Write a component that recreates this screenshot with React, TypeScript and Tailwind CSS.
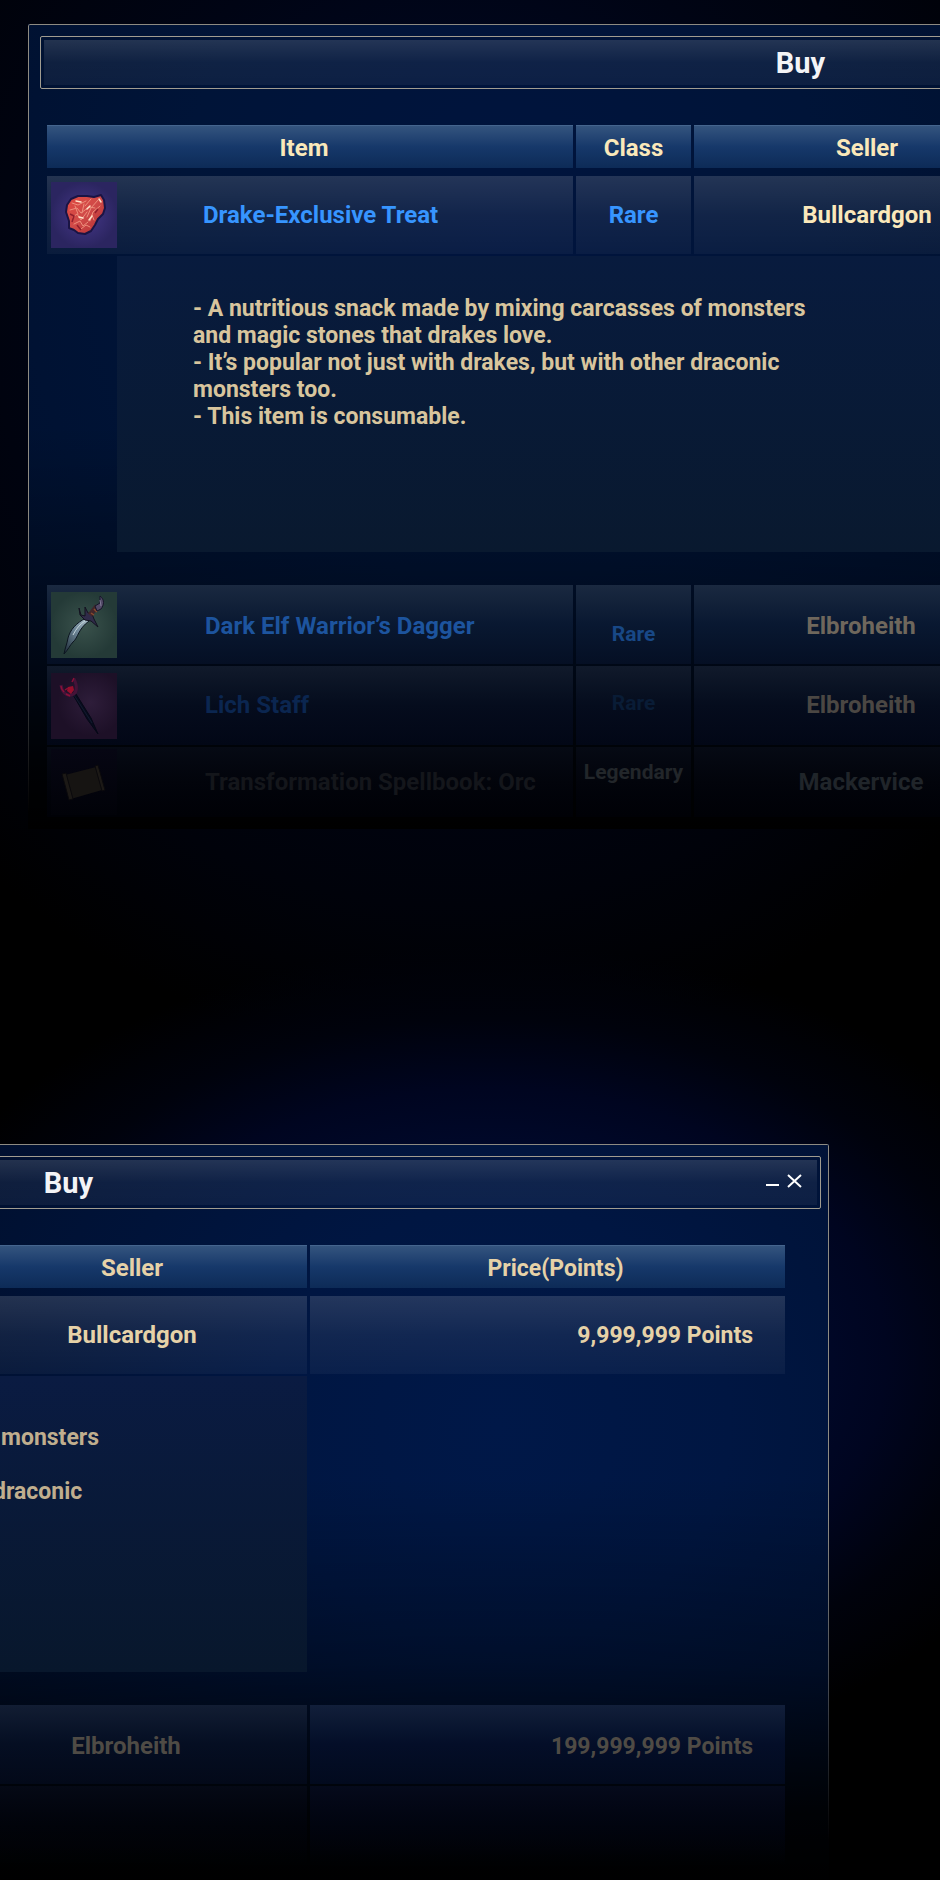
import type { ReactNode } from "react"
import clsx from "clsx"

const SHOP_ITEMS = [
  {
    id: "dagger",
    name: "Dark Elf Warrior’s Dagger",
    nameStyle: "text-[#1d549e] pt-1",
    rank: "Rare",
    rankStyle: "text-[#184886] pt-5",
    seller: "Elbroheith",
    sellerStyle: "text-[#6f675c] pt-1",
    cell: "h-[79px] from-[#1a2940] via-[#091831] to-[#050f24]",
    icon: <DaggerIcon />
  },
  {
    id: "staff",
    name: "Lich Staff",
    nameStyle: "text-[#0b2650]",
    rank: "Rare",
    rankStyle: "text-[#091c36] pb-1",
    seller: "Elbroheith",
    sellerStyle: "text-[#4b4743]",
    cell: "h-[79px] from-[#111a2b] via-[#050c1d] to-[#020716]",
    icon: <StaffIcon />
  },
  {
    id: "spellbook",
    name: "Transformation Spellbook: Orc",
    nameStyle: "text-[#14161b]",
    rank: "Legendary",
    rankStyle: "text-[#22262a] pb-5",
    seller: "Mackervice",
    sellerStyle: "text-[#20252a]",
    cell: "h-[70px] from-[#060a14] via-[#02040b] to-[#000106]",
    icon: <SpellbookIcon />
  }
]

const HEAD_CELL =
  "h-[43px] p-0 pt-0.5 font-bold border-t border-[#45658e] bg-linear-to-b from-[#34547e] via-[#16386a] to-[#0d2b57]"
const ITEM_CELL = "h-[78px] p-0 bg-linear-to-b from-white/14 via-white/7 to-white/4"
const DIM_CELL = "p-0 bg-linear-to-b"

function MeatIcon() {
  return (
    <svg viewBox="0 0 66 66" className="block size-[66px] shrink-0" aria-hidden="true">
      <defs>
        <radialGradient id="meat-bg">
          <stop offset="0" stopColor="#46388a" />
          <stop offset="1" stopColor="#2b2560" />
        </radialGradient>
        <linearGradient id="meat" x1="0" y1="0" x2="1" y2="1">
          <stop offset="0" stopColor="#e0483f" />
          <stop offset="0.5" stopColor="#d04a48" />
          <stop offset="1" stopColor="#b02b30" />
        </linearGradient>
      </defs>
      <rect width="66" height="66" fill="url(#meat-bg)" />
      <path
        d="M20 17 27 14 36 14 43 15 50 13 53 18 54 26 52 32 47 37 44 43 40 49 34 52 27 51 23 48 18 46 18 39 15 30 16 23Z"
        fill="url(#meat)"
        stroke="#1a1444"
        strokeWidth="2"
        strokeLinejoin="round"
      />
      <path
        d="M21 21l6 2 8-4M19 28l7-2 4 5 8-6 6 1M22 35l4-3 4 6 6-8M24 24l3 8M33 22l-2 9M40 17l-6 7M47 18l-7 8-4 9M49 24l-7 6-3 9M23 42l6-3 3 5 5-4M30 47l5-4 4 2M41 33l2 5"
        fill="none"
        stroke="#ee8f7c"
        strokeLinecap="round"
      />
      <path d="M25 19l5 1M36 27l3-3M28 35l4 1M38 38l3-4M48 17l2 3" stroke="#ffe0c8" strokeWidth="1.5" strokeLinecap="round" />
      <path d="M19 32l4 2-2 6M26 43l4 5M44 31l3-4" fill="none" stroke="#931f2c" strokeWidth="1.5" />
    </svg>
  )
}

function DaggerIcon() {
  return (
    <svg viewBox="0 0 66 66" className="block size-[66px] shrink-0" aria-hidden="true">
      <defs>
        <radialGradient id="dagger-bg">
          <stop offset="0" stopColor="#3a524c" />
          <stop offset="1" stopColor="#243a37" />
        </radialGradient>
        <linearGradient id="blade" x1="1" y1="0" x2="0" y2="1">
          <stop offset="0" stopColor="#b0c3cc" />
          <stop offset="0.45" stopColor="#6a8292" />
          <stop offset="1" stopColor="#1a2734" />
        </linearGradient>
      </defs>
      <rect width="66" height="66" fill="url(#dagger-bg)" />
      <path
        d="M35 26C25 31 19 38 17 46 16 52 14 56 13 62 17 58 19 53 22 50 27 46 27 37 38 29Z"
        fill="url(#blade)"
        stroke="#0c1520"
      />
      <path d="M34 29C29 32 25 37 22 43" fill="none" stroke="#c5d5da" />
      <path
        d="M28 16l2 7 4 1 0-9 3 6 4 1 2 5 4 8-7-6-6-1-5-5Z"
        fill="#302b49"
        stroke="#12121f"
        strokeLinejoin="round"
      />
      <path d="M39 23 46 14" stroke="#42262a" strokeWidth="5" />
      <path d="M40 21l3 2M43 17l3 3M45 14l3 2" stroke="#8a4a2e" strokeWidth="1.5" />
      <path d="M44 14 49 11 49 4C54 8 53 13 50 17L46 19Z" fill="#514966" stroke="#17152a" strokeLinejoin="round" />
      <path d="M49 8l1 6" stroke="#837b98" />
    </svg>
  )
}

function StaffIcon() {
  return (
    <svg viewBox="0 0 66 66" className="block size-[66px] shrink-0" aria-hidden="true">
      <defs>
        <radialGradient id="staff-bg" cx="0.6" cy="0.45">
          <stop offset="0" stopColor="#2e1d3a" />
          <stop offset="1" stopColor="#1d1027" />
        </radialGradient>
      </defs>
      <rect width="66" height="66" fill="url(#staff-bg)" />
      <path d="M21 20 25 21 40 45 47 61 36 46Z" fill="#080c1d" stroke="#050817" strokeLinejoin="round" />
      <path d="M23 22 41 50" stroke="#121b30" />
      <path d="M10 12C11 19 15 23 20 22 26 21 27 14 23 6" fill="none" stroke="#451338" strokeWidth="3" />
      <path d="M10 13c0 3 2 5 3 6M21 9l2-4M14 17l3-2M15 21l4 2" fill="none" stroke="#8a1038" strokeWidth="1.5" />
      <path d="M17 14l5-1 1 4-3 4-4-3Z" fill="#970f2c" />
    </svg>
  )
}

function SpellbookIcon() {
  return (
    <svg viewBox="0 0 66 66" className="block size-[66px] shrink-0" aria-hidden="true">
      <defs>
        <linearGradient id="spellbook-bg" x1="0" y1="0" x2="0" y2="1">
          <stop offset="0" stopColor="#060613" />
          <stop offset="1" stopColor="#010208" />
        </linearGradient>
      </defs>
      <rect width="66" height="66" fill="url(#spellbook-bg)" />
      <path d="M14 26 45 18 51 41 20 50Z" fill="#161412" />
      <path d="M11 25 15 24 22 50 18 51Z" fill="#1c1916" stroke="#0a090c" />
      <path d="M44 17 47 16 54 41 51 42Z" fill="#1c1916" stroke="#0a090c" />
    </svg>
  )
}

// Thin outline that dissolves towards the bottom of the window
function Frame({ className }: { className: string }) {
  return <div className={clsx("absolute inset-0 pointer-events-none border-t border-[#8e8b82]", className)} />
}

function TitleBar({ children }: { children?: ReactNode }) {
  return (
    <div className="relative w-[1513px] shrink-0 h-[53px] p-[3px] border border-[#a09c90] rounded-xs">
      <div className="relative h-full flex items-center justify-center pl-2 bg-linear-to-b from-white/14 via-white/6 to-white/5">
        <h2 className="text-[29px] leading-8 font-bold text-[#f4f4f6]">Buy</h2>
        {children}
      </div>
    </div>
  )
}

const App = () => {
  return (
    <main className="overflow-hidden bg-black bg-[radial-gradient(ellipse_65%_22%_at_52%_72%,#000f3c_0%,#000c34_35%,#000520_65%,#00020c_82%,transparent_100%),radial-gradient(ellipse_75%_40%_at_48%_16%,#000a2a_0%,#000414_50%,#00020a_80%,transparent_100%)] font-[Roboto,'Liberation_Sans',sans-serif] text-[24px] leading-[27px] font-bold">
      <section className="pt-6 pl-7 pb-[291px]">
        <div className="relative pl-3 pt-3 pb-2.5 bg-[linear-gradient(to_bottom,transparent_50%,rgb(0_0_0/0.35)_70%,rgb(0_0_0/0.9)_92%,black_100%),radial-gradient(ellipse_70%_90%_at_52%_25%,#00143e_0%,#001438_50%,#00102e_100%)]">
          <Frame className="border-l rounded-tl-xs mask-[linear-gradient(to_bottom,black_60%,transparent_98%)]" />
          <TitleBar />
          <table className="table-fixed w-[999px] ml-1 mt-[34px] border-separate border-spacing-x-[3px] border-spacing-y-0.5">
            <colgroup>
              <col className="w-[526px]" />
              <col className="w-[115px]" />
              <col className="w-[346px]" />
            </colgroup>
            <thead className="text-[#fae8ba]">
              <tr>
                <th className={clsx(HEAD_CELL, "pr-3")}>Item</th>
                <th className={HEAD_CELL}>Class</th>
                <th className={HEAD_CELL}>Seller</th>
              </tr>
            </thead>
            <tbody>
              <tr aria-hidden="true">
                <td colSpan={3} className="h-1 p-0" />
              </tr>
              <tr>
                <td className={ITEM_CELL}>
                  <div className="flex items-center gap-[86px] pl-1 text-[#3795ff]">
                    <MeatIcon />
                    Drake-Exclusive Treat
                  </div>
                </td>
                <td className={clsx(ITEM_CELL, "text-center text-[#3795ff]")}>Rare</td>
                <td className={clsx(ITEM_CELL, "text-center text-[#fae8ba]")}>Bullcardgon</td>
              </tr>
              <tr>
                <td colSpan={3} className="h-[296px] p-0 pl-[70px]">
                  <div className="h-full pt-[39px] pl-[76px] bg-linear-to-b from-[#081b3e] to-[#09192f] text-[23px] text-[#d8c59d]">
                    <p>- A nutritious snack made by mixing carcasses of monsters</p>
                    <p>and magic stones that drakes love.</p>
                    <p>- It’s popular not just with drakes, but with other draconic</p>
                    <p>monsters too.</p>
                    <p>- This item is consumable.</p>
                  </div>
                </td>
              </tr>
              <tr aria-hidden="true">
                <td colSpan={3} className="h-[29px] p-0" />
              </tr>
              {SHOP_ITEMS.map((item) => {
                return (
                  <tr key={item.id}>
                    <td className={clsx(DIM_CELL, item.cell)}>
                      <div className="flex items-center gap-[88px] pl-1">
                        {item.icon}
                        <span className={item.nameStyle}>{item.name}</span>
                      </div>
                    </td>
                    <td className={clsx(DIM_CELL, item.cell)}>
                      <div className={clsx("text-center text-[21px]", item.rankStyle)}>{item.rank}</div>
                    </td>
                    <td className={clsx(DIM_CELL, item.cell)}>
                      <div className={clsx("text-center pr-3", item.sellerStyle)}>{item.seller}</div>
                    </td>
                  </tr>
                )
              })}
            </tbody>
          </table>
        </div>
      </section>

      <section className="pt-6 pr-[111px]">
        <div className="relative flex flex-col items-end pr-2 pt-3 pb-5 bg-[linear-gradient(to_bottom,transparent_45%,rgb(0_0_0/0.35)_70%,rgb(0_0_0/0.9)_90%,black_100%),radial-gradient(ellipse_70%_75%_at_60%_38%,#001848_0%,#001642_40%,#001030_100%)]">
          <Frame className="border-r rounded-tr-xs mask-[linear-gradient(to_bottom,black_50%,transparent_94%)]" />
          <TitleBar>
            <div className="absolute right-3 top-2.5 flex gap-0.5 text-white">
              <button type="button" aria-label="Minimize" className="size-5 flex items-center justify-center">
                <svg viewBox="0 0 20 20" className="size-5" stroke="currentColor" strokeWidth="2">
                  <path d="M3 15h13" />
                </svg>
              </button>
              <button type="button" aria-label="Close" className="size-5 flex items-center justify-center">
                <svg viewBox="0 0 20 20" className="size-5" stroke="currentColor" strokeWidth="2">
                  <path d="M3 5l13 12M16 5L3 17" />
                </svg>
              </button>
            </div>
          </TitleBar>
          <table className="table-fixed w-[830px] mr-[33px] mt-[34px] border-separate border-spacing-x-[3px] border-spacing-y-0.5">
            <colgroup>
              <col className="w-[346px]" />
              <col className="w-[475px]" />
            </colgroup>
            <thead className="text-[#e6d2a8]">
              <tr>
                <th className={HEAD_CELL}>
                  <div className="pr-1">Seller</div>
                </th>
                <th className={clsx(HEAD_CELL, "pl-4 text-[23px]")}>Price(Points)</th>
              </tr>
            </thead>
            <tbody>
              <tr aria-hidden="true">
                <td colSpan={2} className="h-1 p-0" />
              </tr>
              <tr className="text-[#e6d2a8]">
                <td className={clsx(ITEM_CELL, "text-center")}>
                  <div className="pr-1">Bullcardgon</div>
                </td>
                <td className={clsx(ITEM_CELL, "text-right text-[23px]")}>
                  <div className="pr-8">9,999,999 Points</div>
                </td>
              </tr>
              <tr>
                <td className="h-[296px] p-0">
                  <div className="h-full pt-12 pl-8 bg-linear-to-b from-[#0a1b42] to-[#08172c] text-[23px] text-[#c0ae8e]">
                    <p className="pl-2">monsters</p>
                    <p className="pt-[27px]">draconic</p>
                  </div>
                </td>
                <td />
              </tr>
              <tr aria-hidden="true">
                <td colSpan={2} className="h-[29px] p-0" />
              </tr>
              <tr className="text-[#4f4b45]">
                <td className={clsx(DIM_CELL, "h-[79px] text-center from-[#121d33] via-[#050e22] to-[#030919]")}>
                  <div className="pr-4 pt-1">Elbroheith</div>
                </td>
                <td className={clsx(DIM_CELL, "h-[79px] text-right text-[23px] from-[#121f3a] via-[#040e28] to-[#020a1e]")}>
                  <div className="pr-8 pt-1">199,999,999 Points</div>
                </td>
              </tr>
              <tr aria-hidden="true">
                <td className={clsx(DIM_CELL, "h-[79px] from-[#050915] via-[#01030a] to-transparent")} />
                <td className={clsx(DIM_CELL, "h-[79px] from-[#050a1b] via-[#01040f] to-transparent")} />
              </tr>
            </tbody>
          </table>
        </div>
      </section>
    </main>
  )
}

export default App
